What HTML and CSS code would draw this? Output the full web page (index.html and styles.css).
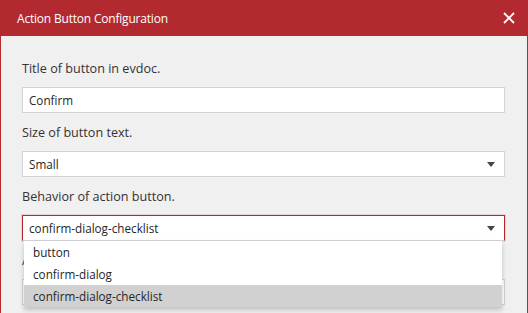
FILE: index.html
```html
<!DOCTYPE html>
<html lang="en">
<head>
    <meta charset="UTF-8">
    <meta name="viewport" content="width=device-width, initial-scale=1.0">
    <title>Action Button Configuration</title>
    <link rel="stylesheet" href="styles.css">
</head>
<body>
    <main class="dialog">
        <header class="dialog-header">
            <h1 class="dialog-title">Action Button Configuration</h1>
            <button class="close-button" aria-label="Close">
                <svg width="12" height="12" viewBox="0 0 12 12">
                    <path d="M1 1 L11 11 M11 1 L1 11" stroke="#ffffff" stroke-width="1.8" fill="none"/>
                </svg>
            </button>
        </header>
        <section class="dialog-body">
            <div class="field">
                <label class="field-label">Title of button in evdoc.</label>
                <input class="text-input" type="text" value="Confirm">
            </div>
            <div class="field">
                <label class="field-label">Size of button text.</label>
                <div class="select">
                    <span class="select-value">Small</span>
                    <svg class="select-arrow" width="8" height="5" viewBox="0 0 8 5"><path d="M0 0 H8 L4 5 Z" fill="#444444"/></svg>
                </div>
            </div>
            <div class="field">
                <label class="field-label">Behavior of action button.</label>
                <div class="select select-open">
                    <span class="select-value">confirm-dialog-checklist</span>
                    <svg class="select-arrow" width="8" height="5" viewBox="0 0 8 5"><path d="M0 0 H8 L4 5 Z" fill="#444444"/></svg>
                    <ul class="select-options">
                        <li class="select-option">button</li>
                        <li class="select-option">confirm-dialog</li>
                        <li class="select-option selected">confirm-dialog-checklist</li>
                    </ul>
                </div>
            </div>
            <div class="field">
                <label class="field-label">Action.</label>
                <input class="text-input" type="text" value="">
            </div>
        </section>
    </main>
</body>
</html>
```

FILE: styles.css
```css
:root {
    --red-color: #b22a30;
    --background-color: #f0f0f0;
    --border-color: #d2d2d8;
    --text-color: #262626;
}
body {
    margin: 0;
    font-family: "Open Sans", "Noto Sans", sans-serif;
    color: var(--text-color);
    overflow: hidden;
}
.dialog {
    min-height: 313px;
    box-sizing: border-box;
    background-color: var(--background-color);
    border-left: 1px solid var(--red-color);
    border-right: 1px solid var(--red-color);
}
.dialog-header {
    height: 36px;
    display: flex;
    align-items: center;
    justify-content: space-between;
    padding: 0 12px 0 16px;
    background-color: var(--red-color);
}
.dialog-title {
    margin: 0;
    font-size: 12px;
    font-weight: 400;
    letter-spacing: -0.2px;
    color: #ffffff;
}
.close-button {
    border: none;
    outline: none;
    background: none;
    padding: 0;
    display: flex;
}
.dialog-body {
    padding: 25px 22px 0 21px;
}
.field {
    display: flex;
    flex-direction: column;
    margin-bottom: 12px;
}
.field-label {
    font-size: 12.6px;
    line-height: 16px;
    margin-bottom: 10px;
    color: #333333;
}
.text-input,
.select {
    height: 26px;
    box-sizing: border-box;
    border: 1px solid var(--border-color);
    background-color: #ffffff;
    padding: 0 6px;
    font-family: inherit;
    font-size: 11.7px;
    color: var(--text-color);
    outline: none;
}
.select {
    position: relative;
    display: flex;
    align-items: center;
    justify-content: space-between;
    padding-right: 9px;
}
.select-open {
    border-color: var(--red-color);
    border-bottom-color: var(--border-color);
    box-shadow: 0 0 0 1px rgba(178, 42, 48, 0.15);
}
.select-options {
    position: absolute;
    top: 25px;
    left: 1px;
    right: 2px;
    margin: 0;
    padding: 0;
    list-style: none;
    background-color: #ffffff;
    box-shadow: 0 3px 5px rgba(0, 0, 0, 0.2);
    z-index: 10;
}
.select-option {
    height: 22px;
    line-height: 22px;
    padding: 0 9px;
}
.select-option.selected {
    background-color: #d1d1d1;
}
```
